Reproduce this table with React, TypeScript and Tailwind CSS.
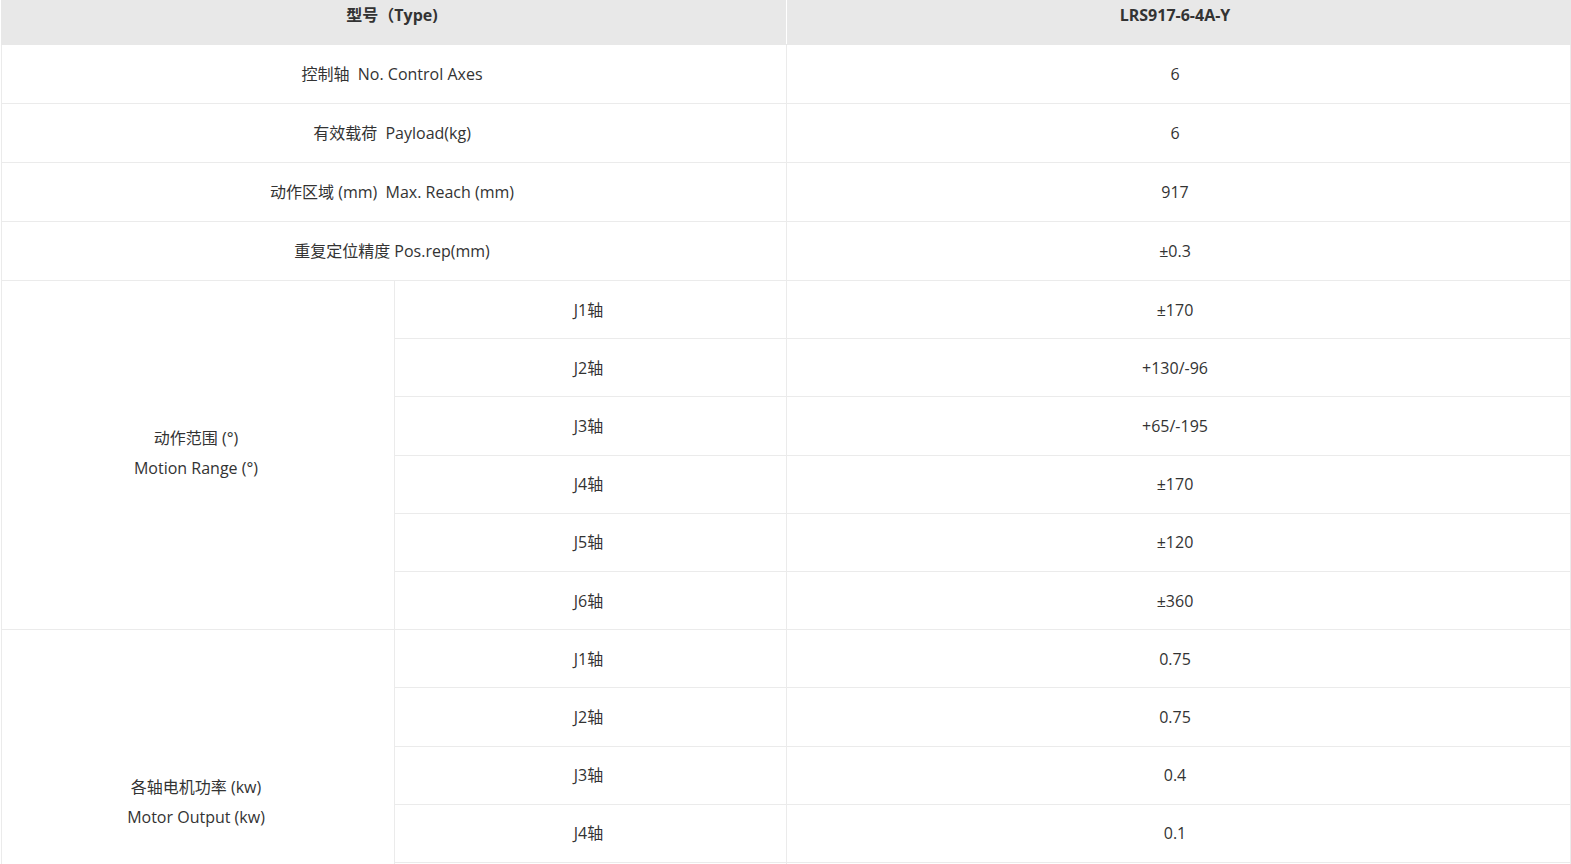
const font = {
  fontFamily: '"Open Sans", "Noto Sans CJK SC", sans-serif',
};

const topRows = [
  { label: '控制轴\u00a0 No. Control Axes', value: '6' },
  { label: '有效载荷\u00a0 Payload(kg)', value: '6' },
  { label: '动作区域 (mm)\u00a0 Max. Reach (mm)', value: '917' },
  { label: '重复定位精度 Pos.rep(mm)', value: '±0.3' },
];

const groups = [
  {
    zh: '动作范围 (°)',
    en: 'Motion Range (°)',
    rows: [
      ['J1轴', '±170'],
      ['J2轴', '+130/-96'],
      ['J3轴', '+65/-195'],
      ['J4轴', '±170'],
      ['J5轴', '±120'],
      ['J6轴', '±360'],
    ],
  },
  {
    zh: '各轴电机功率 (kw)',
    en: 'Motor Output (kw)',
    rows: [
      ['J1轴', '0.75'],
      ['J2轴', '0.75'],
      ['J3轴', '0.4'],
      ['J4轴', '0.1'],
      ['J5轴', '0.1'],
      ['J6轴', '0.1'],
    ],
  },
];

const cell = 'border border-[#ebebeb] text-center align-middle py-0 pl-0 pr-[4px]';
const valueCell = 'border border-[#ebebeb] text-center align-middle py-0 pl-0 pr-[7px]';

export default function App() {
  return (
    <div className="bg-white min-h-screen text-[16px] text-[#333] pl-[1px]" style={font}>
      <table className="w-[1569px] border-collapse table-fixed">
        <colgroup>
          <col className="w-[393px]" />
          <col className="w-[392px]" />
          <col className="w-[784px]" />
        </colgroup>
        <thead>
          <tr className="bg-[#e8e8e8] h-[44px]">
            <th colSpan={2} className="border border-[#e8e8e8] border-r-white align-top pt-[2px] pr-[4px] font-bold text-[16px]">
              型号（Type)
            </th>
            <th className="border border-[#e8e8e8] align-top pt-[2px] pr-[7px] font-bold text-[16px]">LRS917-6-4A-Y</th>
          </tr>
        </thead>
        <tbody>
          {topRows.map((r) => (
            <tr key={r.label} className="h-[59px]">
              <td colSpan={2} className={cell}>
                {r.label}
              </td>
              <td className={valueCell}>{r.value}</td>
            </tr>
          ))}
          {groups.map((g) =>
            g.rows.map(([axis, value], i) => (
              <tr key={g.zh + axis} className="h-[58.2px]">
                {i === 0 && (
                  <td rowSpan={g.rows.length} className={cell}>
                    <div className="leading-[30px] pb-[4px]">
                      <div>{g.zh}</div>
                      <div>{g.en}</div>
                    </div>
                  </td>
                )}
                <td className={cell}>{axis}</td>
                <td className={valueCell}>{value}</td>
              </tr>
            )),
          )}
        </tbody>
      </table>
    </div>
  );
}
